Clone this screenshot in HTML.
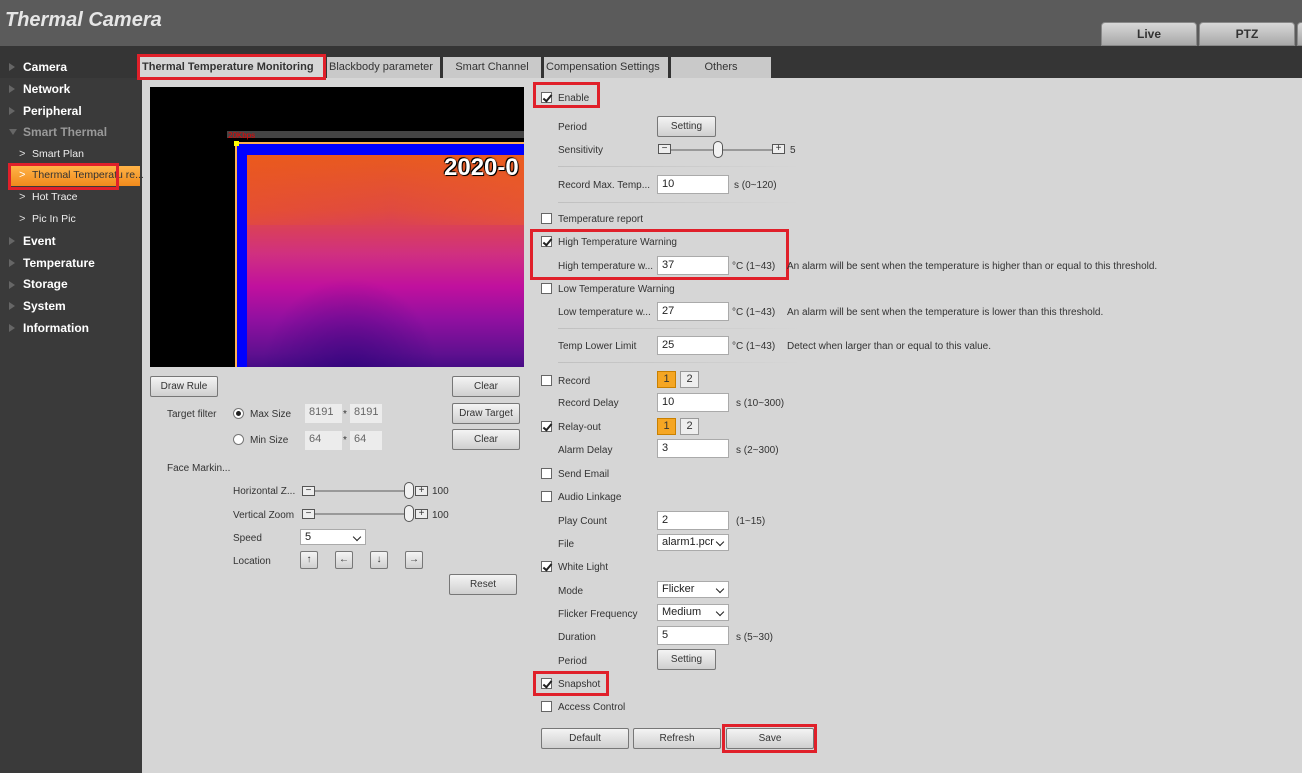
<!DOCTYPE html>
<html><head><meta charset="utf-8"><style>
*{box-sizing:border-box;margin:0;padding:0}
body{width:1302px;height:773px;overflow:hidden;background:#d6d6d6;font-family:"Liberation Sans",Arial,sans-serif;font-size:10px;color:#333;position:relative}
.a{position:absolute;white-space:nowrap}
.t{height:16px;line-height:19px}
.hdr{left:0;top:0;width:1302px;height:46px;background:#5b5b5b}
.band{left:0;top:46px;width:1302px;height:32px;background:#353535}
.side{left:0;top:78px;width:142px;height:695px;background:#3a3a3a}
.logo{left:5px;top:9px;font-size:20px;font-weight:bold;font-style:italic;color:#e6e6e6}
.tt{top:22px;height:24px;border-radius:4px 4px 0 0;background:linear-gradient(#d8d8d8,#a8a8a8);border:1px solid #888;font-weight:bold;font-size:12px;text-align:center;line-height:22px;color:#333}
.nav{color:#fff;font-weight:bold;font-size:12px;left:23px;line-height:17px}
.tri{left:9px;width:0;height:0;border-left:6px solid #666;border-top:4px solid transparent;border-bottom:4px solid transparent}
.sub{color:#eee;font-size:10.5px;left:32px;line-height:17px}
.chev{color:#ddd;left:19px;font-size:11px;line-height:17px}
.tab{top:57px;height:21px;line-height:21px;font-size:11px;background:#c9c9c9;color:#333;padding:0 2px;overflow:hidden}
.red{position:absolute;border:3px solid #e0202a}
.cb{width:11px;height:11px;border:1px solid #666;background:#fff;left:541px}
.cb.c::after{content:"";position:absolute;left:3px;top:0px;width:3px;height:7px;border:solid #222;border-width:0 2px 2px 0;transform:rotate(40deg)}
.lbl{left:558px}
.inp{left:657px;width:72px;height:19px;background:#fff;border:1px solid #aaa;padding-left:4px;line-height:17px;font-size:11px;color:#222}
.sel::after{content:"";position:absolute;right:5px;top:4px;width:5px;height:5px;border:solid #222;border-width:0 1.5px 1.5px 0;transform:rotate(45deg)}
.btn{background:linear-gradient(#f4f4f4,#cfcfcf);border:1px solid #777;text-align:center;font-size:10px;color:#333;border-radius:2px}
.sep{height:1px;background:linear-gradient(90deg,#c0c0c0,#d6d6d6);left:558px;width:245px}
.num{width:19px;height:17px;border:1px solid #999;text-align:center;line-height:15px;font-size:11px}
.on{background:#f5a623;border-color:#c98000}
.off{background:#eee}
.small{width:13px;height:10px;border:1px solid #555;background:#eee;font-size:10px;line-height:8px;text-align:center}
.track{height:2px;background:#999}
.knob{width:10px;height:17px;border:1px solid #555;border-radius:5px;background:#f2f2f2}
.gray{background:#ececec;border:none;color:#666}
</style></head><body>
<div class="a hdr"></div>
<div class="a logo">Thermal Camera</div>
<div class="a tt" style="left:1101px;width:96px">Live</div>
<div class="a tt" style="left:1199px;width:96px">PTZ</div>
<div class="a tt" style="left:1297px;width:10px"></div>
<div class="a band"></div>
<div class="a side"></div>

<div class="a tri" style="top:63px"></div><div class="a t nav" style="top:59px">Camera</div>
<div class="a tri" style="top:85px"></div><div class="a t nav" style="top:81px">Network</div>
<div class="a tri" style="top:107px"></div><div class="a t nav" style="top:103px">Peripheral</div>
<div class="a" style="left:9px;top:129px;border-top:6px solid #666;border-left:4px solid transparent;border-right:4px solid transparent"></div><div class="a t nav" style="top:124px;color:#999">Smart Thermal</div>
<div class="a t chev" style="top:146px">&gt;</div><div class="a t sub" style="top:146px">Smart Plan</div>
<div class="a" style="left:8px;top:166px;width:132px;height:20px;background:linear-gradient(#ffb347,#f08a1c)"></div>
<div class="a t chev" style="top:167px;color:#fff">&gt;</div><div class="a t sub" style="top:167px;color:#333">Thermal Temperatu re...</div>
<div class="red" style="left:8px;top:163px;width:111px;height:27px"></div>
<div class="a t chev" style="top:189px">&gt;</div><div class="a t sub" style="top:189px">Hot Trace</div>
<div class="a t chev" style="top:211px">&gt;</div><div class="a t sub" style="top:211px">Pic In Pic</div>
<div class="a tri" style="top:237px"></div><div class="a t nav" style="top:233px">Event</div>
<div class="a tri" style="top:259px"></div><div class="a t nav" style="top:255px">Temperature</div>
<div class="a tri" style="top:281px"></div><div class="a t nav" style="top:276px">Storage</div>
<div class="a tri" style="top:302px"></div><div class="a t nav" style="top:298px">System</div>
<div class="a tri" style="top:324px"></div><div class="a t nav" style="top:320px">Information</div>

<div class="a tab" style="left:140px;width:184px;background:#d6d6d6;font-weight:bold">Thermal Temperature Monitoring</div>
<div class="red" style="left:137px;top:54px;width:189px;height:26px"></div>
<div class="a tab" style="left:327px;width:113px">Blackbody parameter</div>
<div class="a" style="left:440px;top:57px;width:3px;height:21px;background:#333"></div>
<div class="a tab" style="left:443px;width:98px;text-align:center">Smart Channel</div>
<div class="a" style="left:541px;top:57px;width:3px;height:21px;background:#333"></div>
<div class="a tab" style="left:544px;width:124px">Compensation Settings</div>
<div class="a" style="left:668px;top:57px;width:3px;height:21px;background:#333"></div>
<div class="a tab" style="left:671px;width:100px;text-align:center">Others</div>

<!-- video -->
<div class="a" style="left:150px;top:87px;width:374px;height:280px;background:#000;overflow:hidden">
 <div class="a" style="left:77px;top:44px;width:300px;height:7px;background:#444"></div>
 <div class="a" style="left:78px;top:44px;font-size:8px;color:#e00">20Kbps</div>
 <div class="a" style="left:85px;top:55px;width:300px;height:230px;border-left:2px solid #ffb050;border-top:2px solid #ffb050;background:#0000ff"></div>
 <div class="a" style="left:84px;top:54px;width:5px;height:5px;background:#ff0"></div>
 <div class="a" style="left:97px;top:68px;width:290px;height:220px;background:linear-gradient(180deg,#e85a20 0%,#e04a40 25%,#d03080 45%,#c0109e 60%,#9010a0 75%,#601090 90%,#3a0a80 100%)"></div>
 <div class="a" style="left:97px;top:68px;width:290px;height:70px;background:linear-gradient(90deg,rgba(240,90,20,.3),rgba(230,80,30,0) 50%,rgba(240,100,30,.4))"></div>
 <div class="a" style="left:110px;top:190px;width:180px;height:100px;background:radial-gradient(ellipse at 50% 100%,rgba(40,0,120,.6),rgba(40,0,120,0) 70%)"></div>
 <div class="a" style="left:294px;top:67px;font-size:24px;font-weight:bold;color:#fff;text-shadow:0 0 2px #000,1px 1px 0 #000,-1px -1px 0 #000">2020-0</div>
</div>

<div class="a btn" style="left:150px;top:376px;width:68px;height:21px;line-height:19px">Draw Rule</div>
<div class="a btn" style="left:452px;top:376px;width:68px;height:21px;line-height:19px">Clear</div>
<div class="a btn" style="left:452px;top:403px;width:68px;height:21px;line-height:19px">Draw Target</div>
<div class="a btn" style="left:452px;top:429px;width:68px;height:21px;line-height:19px">Clear</div>
<div class="a t" style="left:167px;top:405px">Target filter</div>
<div class="a" style="left:233px;top:408px;width:11px;height:11px;border-radius:50%;border:1px solid #777;background:#fff"><div style="margin:2px;width:5px;height:5px;border-radius:50%;background:#222"></div></div>
<div class="a t" style="left:250px;top:405px">Max Size</div>
<div class="a inp gray" style="left:305px;top:404px;width:37px">8191</div>
<div class="a t" style="left:343px;top:405px">*</div>
<div class="a inp gray" style="left:350px;top:404px;width:32px">8191</div>
<div class="a" style="left:233px;top:434px;width:11px;height:11px;border-radius:50%;border:1px solid #777;background:#fff"></div>
<div class="a t" style="left:250px;top:431px">Min Size</div>
<div class="a inp gray" style="left:305px;top:431px;width:37px">64</div>
<div class="a t" style="left:343px;top:431px">*</div>
<div class="a inp gray" style="left:350px;top:431px;width:32px">64</div>
<div class="a t" style="left:167px;top:459px">Face Markin...</div>
<div class="a t" style="left:233px;top:482px">Horizontal Z...</div>
<div class="a small" style="left:302px;top:486px">−</div>
<div class="a track" style="left:315px;top:490px;width:92px"></div>
<div class="a knob" style="left:404px;top:482px"></div>
<div class="a small" style="left:415px;top:486px">+</div>
<div class="a t" style="left:432px;top:482px">100</div>
<div class="a t" style="left:233px;top:506px">Vertical Zoom</div>
<div class="a small" style="left:302px;top:509px">−</div>
<div class="a track" style="left:315px;top:513px;width:92px"></div>
<div class="a knob" style="left:404px;top:505px"></div>
<div class="a small" style="left:415px;top:509px">+</div>
<div class="a t" style="left:432px;top:506px">100</div>
<div class="a t" style="left:233px;top:529px">Speed</div>
<div class="a inp sel" style="left:300px;top:529px;width:66px;height:16px;line-height:14px">5</div>
<div class="a t" style="left:233px;top:552px">Location</div>
<div class="a btn" style="left:300px;top:551px;width:18px;height:18px;line-height:16px">↑</div>
<div class="a btn" style="left:335px;top:551px;width:18px;height:18px;line-height:16px">←</div>
<div class="a btn" style="left:370px;top:551px;width:18px;height:18px;line-height:16px">↓</div>
<div class="a btn" style="left:405px;top:551px;width:18px;height:18px;line-height:16px">→</div>
<div class="a btn" style="left:449px;top:574px;width:68px;height:21px;line-height:19px">Reset</div>

<!-- right form -->
<div class="a cb c" style="top:92px"></div><div class="a t lbl" style="top:89px">Enable</div>
<div class="red" style="left:533px;top:82px;width:67px;height:26px"></div>
<div class="a t lbl" style="top:118px">Period</div>
<div class="a btn" style="left:657px;top:116px;width:59px;height:21px;line-height:19px">Setting</div>
<div class="a t lbl" style="top:141px">Sensitivity</div>
<div class="a small" style="left:658px;top:144px">−</div>
<div class="a track" style="left:671px;top:149px;width:102px"></div>
<div class="a knob" style="left:713px;top:141px"></div>
<div class="a small" style="left:772px;top:144px">+</div>
<div class="a t" style="left:790px;top:141px">5</div>
<div class="a sep" style="top:166px"></div>
<div class="a t lbl" style="top:176px">Record Max. Temp...</div>
<div class="a inp" style="top:175px">10</div>
<div class="a t" style="left:734px;top:176px">s (0~120)</div>
<div class="a sep" style="top:202px"></div>
<div class="a cb" style="top:213px"></div><div class="a t lbl" style="top:210px">Temperature report</div>
<div class="a cb c" style="top:236px"></div><div class="a t lbl" style="top:233px">High Temperature Warning</div>
<div class="a t lbl" style="top:257px">High temperature w...</div>
<div class="a inp" style="top:256px">37</div>
<div class="a t" style="left:732px;top:257px">°C (1~43)</div>
<div class="red" style="left:530px;top:229px;width:259px;height:51px"></div>
<div class="a t" style="left:787px;top:257px">An alarm will be sent when the temperature is higher than or equal to this threshold.</div>
<div class="a cb" style="top:283px"></div><div class="a t lbl" style="top:280px">Low Temperature Warning</div>
<div class="a t lbl" style="top:303px">Low temperature w...</div>
<div class="a inp" style="top:302px">27</div>
<div class="a t" style="left:732px;top:303px">°C (1~43)</div>
<div class="a t" style="left:787px;top:303px">An alarm will be sent when the temperature is lower than this threshold.</div>
<div class="a sep" style="top:328px"></div>
<div class="a t lbl" style="top:337px">Temp Lower Limit</div>
<div class="a inp" style="top:336px">25</div>
<div class="a t" style="left:732px;top:337px">°C (1~43)</div>
<div class="a t" style="left:787px;top:337px">Detect when larger than or equal to this value.</div>
<div class="a sep" style="top:362px"></div>
<div class="a cb" style="top:375px"></div><div class="a t lbl" style="top:372px">Record</div>
<div class="a num on" style="left:657px;top:371px">1</div><div class="a num off" style="left:680px;top:371px">2</div>
<div class="a t lbl" style="top:394px">Record Delay</div>
<div class="a inp" style="top:393px">10</div>
<div class="a t" style="left:736px;top:394px">s (10~300)</div>
<div class="a cb c" style="top:421px"></div><div class="a t lbl" style="top:418px">Relay-out</div>
<div class="a num on" style="left:657px;top:418px">1</div><div class="a num off" style="left:680px;top:418px">2</div>
<div class="a t lbl" style="top:441px">Alarm Delay</div>
<div class="a inp" style="top:439px">3</div>
<div class="a t" style="left:736px;top:441px">s (2~300)</div>
<div class="a cb" style="top:468px"></div><div class="a t lbl" style="top:465px">Send Email</div>
<div class="a cb" style="top:491px"></div><div class="a t lbl" style="top:488px">Audio Linkage</div>
<div class="a t lbl" style="top:512px">Play Count</div>
<div class="a inp" style="top:511px">2</div>
<div class="a t" style="left:736px;top:512px">(1~15)</div>
<div class="a t lbl" style="top:535px">File</div>
<div class="a inp sel" style="top:534px;height:17px;line-height:15px">alarm1.pcr</div>
<div class="a cb c" style="top:561px"></div><div class="a t lbl" style="top:558px">White Light</div>
<div class="a t lbl" style="top:582px">Mode</div>
<div class="a inp sel" style="top:581px;height:17px;line-height:15px">Flicker</div>
<div class="a t lbl" style="top:605px">Flicker Frequency</div>
<div class="a inp sel" style="top:604px;height:17px;line-height:15px">Medium</div>
<div class="a t lbl" style="top:628px">Duration</div>
<div class="a inp" style="top:626px">5</div>
<div class="a t" style="left:736px;top:628px">s (5~30)</div>
<div class="a t lbl" style="top:652px">Period</div>
<div class="a btn" style="left:657px;top:649px;width:59px;height:21px;line-height:19px">Setting</div>
<div class="a cb c" style="top:678px"></div><div class="a t lbl" style="top:675px">Snapshot</div>
<div class="red" style="left:533px;top:671px;width:76px;height:25px"></div>
<div class="a cb" style="top:701px"></div><div class="a t lbl" style="top:698px">Access Control</div>
<div class="a btn" style="left:541px;top:728px;width:88px;height:21px;line-height:19px">Default</div>
<div class="a btn" style="left:633px;top:728px;width:88px;height:21px;line-height:19px">Refresh</div>
<div class="a btn" style="left:726px;top:728px;width:88px;height:21px;line-height:19px">Save</div>
<div class="red" style="left:722px;top:724px;width:95px;height:29px"></div>
</body></html>
